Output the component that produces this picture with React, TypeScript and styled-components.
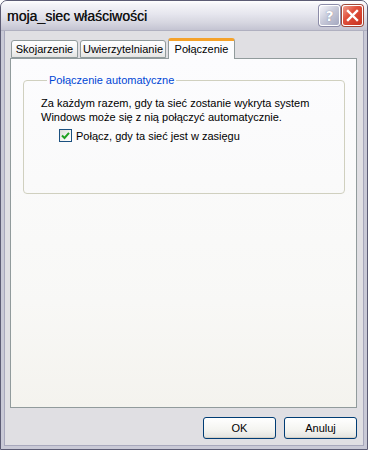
import React from "react";
import styled, { createGlobalStyle } from "styled-components";

const Global = createGlobalStyle`
  html, body { margin: 0; padding: 0; background: #ffffff; }
  body { font-family: "Liberation Sans", Arial, sans-serif; font-size: 11px; color: #000; }
`;

const Window = styled.div`
  width: 368px;
  height: 450px;
  box-sizing: border-box;
  border: 1px solid #5c5c74;
  border-radius: 7px 7px 0 0;
  background: #c9c9d6;
  display: flex;
  flex-direction: column;
  overflow: hidden;
`;

const TitleBar = styled.div`
  height: 29px;
  flex: none;
  display: flex;
  align-items: center;
  padding: 0 4px 0 6px;
  background: linear-gradient(#ffffff 0%, #f4f4f8 12%, #e6e6ee 45%, #d6d6e0 75%, #c4c4d2 100%);
  border-bottom: 1px solid #b0b0c0;
`;

const Title = styled.span`
  flex: 1;
  font-family: "Liberation Sans", Arial, sans-serif;
  font-size: 14px;
  font-weight: normal;
  color: #111111;
  text-shadow: 0.3px 0 0 #333333;
`;

const CapButton = styled.div<{ $close?: boolean }>`
  width: 21px;
  height: 21px;
  box-sizing: border-box;
  margin-left: 2px;
  border: 1px solid #ffffff;
  border-radius: 3px;
  background: ${(p) =>
    p.$close
      ? "linear-gradient(135deg, #f0a090 0%, #e0503c 40%, #c83220 100%)"
      : "linear-gradient(135deg, #f4f4fa 0%, #c6c8d8 50%, #a4a8c0 100%)"};
  box-shadow: 0 0 0 1px ${(p) => (p.$close ? "#a04838" : "#8c8ca8")};
  display: flex;
  align-items: center;
  justify-content: center;
  color: #ffffff;
`;

const HelpGlyph = styled.span`
  font-family: "DejaVu Sans", sans-serif;
  font-weight: bold;
  font-size: 14px;
  color: #ffffff;
  text-shadow: 0 0 1px #6a6a88;
  line-height: 1;
`;

const Client = styled.div`
  flex: 1;
  margin: 0 3px 3px 3px;
  background: #e0dfe3;
  border: 1px solid #a8a8bc;
  border-top: none;
  display: flex;
  flex-direction: column;
  padding: 6px 6px 6px 5px;
`;

const TabRow = styled.div`
  display: flex;
  align-items: flex-end;
  height: 21px;
  padding-left: 1px;
  position: relative;
  z-index: 1;
`;

const Tab = styled.div<{ $active?: boolean; $w: number }>`
  width: ${(p) => p.$w}px;
  box-sizing: border-box;
  height: ${(p) => (p.$active ? 21 : 18)}px;
  margin-right: ${(p) => (p.$active ? 0 : 2)}px;
  margin-bottom: ${(p) => (p.$active ? -1 : 0)}px;
  border: 1px solid #919b9c;
  border-bottom: ${(p) => (p.$active ? "none" : "1px solid #919b9c")};
  border-top: ${(p) => (p.$active ? "3px solid #f5a22a" : "1px solid #919b9c")};
  border-radius: 3px 3px 0 0;
  background: ${(p) =>
    p.$active ? "#fcfcfe" : "linear-gradient(#ffffff 0%, #f3f3f3 60%, #e4e4e2 100%)"};
  display: flex;
  align-items: center;
  justify-content: center;
  padding-bottom: ${(p) => (p.$active ? 3 : 0)}px;
  color: #000;
`;

const Panel = styled.div`
  flex: 1;
  border: 1px solid #919b9c;
  background: linear-gradient(#fcfcfe 0%, #f8f8f6 70%, #f4f3ee 100%);
  padding: 15px 11px 0 12px;
  margin-bottom: 9px;
`;

const Group = styled.fieldset`
  margin: 0;
  height: 120px;
  box-sizing: border-box;
  border: 1px solid #d0d0bf;
  border-radius: 4px;
  padding: 8px 10px 0 17px;
`;

const Legend = styled.legend`
  color: #0046d5;
  padding: 0 2px;
  margin-left: 6px;
`;

const Para = styled.p`
  margin: 2px 0 0 0;
  line-height: 14px;
`;

const CheckRow = styled.label`
  display: flex;
  align-items: center;
  gap: 4px;
  margin: 5px 0 0 18px;
`;

const Box = styled.span`
  width: 13px;
  height: 13px;
  box-sizing: border-box;
  border: 1px solid #1c5180;
  background: linear-gradient(135deg, #dcdcd7 0%, #f6f6f3 60%, #ffffff 100%);
  display: flex;
  align-items: center;
  justify-content: center;
`;

const Buttons = styled.div`
  display: flex;
  justify-content: flex-end;
  gap: 8px;
`;

const Btn = styled.div`
  width: 73px;
  height: 22px;
  box-sizing: border-box;
  border: 1px solid #003c74;
  border-radius: 3px;
  background: linear-gradient(#ffffff 0%, #f4f4f0 60%, #e2e2de 100%);
  box-shadow: inset 0 -1px 0 #d6d0c5;
  display: flex;
  align-items: center;
  justify-content: center;
  color: #000;
`;

export default function App() {
  return (
    <>
      <Global />
      <Window>
        <TitleBar>
          <Title>moja_siec właściwości</Title>
          <CapButton>
            <HelpGlyph>?</HelpGlyph>
          </CapButton>
          <CapButton $close>
            <svg width="13" height="13" viewBox="0 0 13 13">
              <path d="M2 2 L11 11 M11 2 L2 11" stroke="#ffffff" strokeWidth="2.4" strokeLinecap="square" />
            </svg>
          </CapButton>
        </TitleBar>
        <Client>
          <TabRow>
            <Tab $w={67}>Skojarzenie</Tab>
            <Tab $w={86}>Uwierzytelnianie</Tab>
            <Tab $w={67} $active>Połączenie</Tab>
          </TabRow>
          <Panel>
            <Group>
              <Legend>Połączenie automatyczne</Legend>
              <Para>
                Za każdym razem, gdy ta sieć zostanie wykryta system
                <br />
                Windows może się z nią połączyć automatycznie.
              </Para>
              <CheckRow>
                <Box>
                  <svg width="9" height="9" viewBox="0 0 9 9">
                    <path d="M1 4.5 L3.5 7 L8 1.8" stroke="#21a121" strokeWidth="2" fill="none" />
                  </svg>
                </Box>
                Połącz, gdy ta sieć jest w zasięgu
              </CheckRow>
            </Group>
          </Panel>
          <Buttons>
            <Btn>OK</Btn>
            <Btn>Anuluj</Btn>
          </Buttons>
        </Client>
      </Window>
    </>
  );
}
